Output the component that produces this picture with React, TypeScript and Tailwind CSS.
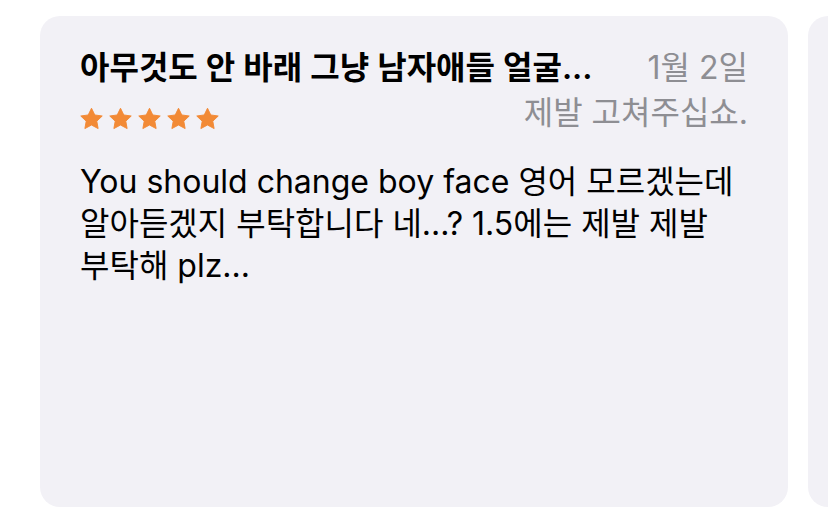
const font = { fontFamily: '"Inter", "Noto Sans CJK KR", sans-serif' };

function Star() {
  return (
    <svg width="23" height="23" viewBox="0 0 24 23" className="fill-[#f28a36] stroke-[#f28a36]">
      <path
        strokeWidth="1"
        strokeLinejoin="round"
        d="M12 0.8L15.41 7.81L23.2 8.9L17.52 14.29L18.9 22L12 18.3L5.1 22L6.48 14.29L0.8 8.9L8.59 7.81Z"
      />
    </svg>
  );
}

function ReviewCard() {
  return (
    <div className="w-[748px] h-[491px] shrink-0 rounded-[20px] bg-[#f2f1f6] px-10 pt-8">
      <div className="flex items-baseline justify-between">
        <h3 className="text-[32px] leading-10 font-semibold text-black">
          아무것도 안 바래 그냥 남자애들 얼굴...
        </h3>
        <span className="text-[32px] leading-10 text-[#8e8e93]">1월 2일</span>
      </div>
      <div className="mt-[5px] flex items-start justify-between">
        <div className="mt-[14px] flex gap-[6px]">
          <Star />
          <Star />
          <Star />
          <Star />
          <Star />
        </div>
        <span className="text-[32px] leading-10 text-[#8e8e93]">제발 고쳐주십쇼.</span>
      </div>
      <p className="mt-7 break-keep text-[32px] leading-[42px] text-black">
        You should change boy face 영어 모르겠는데 알아듣겠지 부탁합니다 네...? 1.5에는 제발 제발 부탁해 plz...
      </p>
    </div>
  );
}

export default function App() {
  return (
    <div style={font} className="w-[828px] h-[529px] overflow-hidden bg-white">
      <div className="flex gap-5 pl-10 pt-4">
        <ReviewCard />
        <div className="w-[748px] h-[491px] shrink-0 rounded-[20px] bg-[#f2f1f6]" />
      </div>
    </div>
  );
}
